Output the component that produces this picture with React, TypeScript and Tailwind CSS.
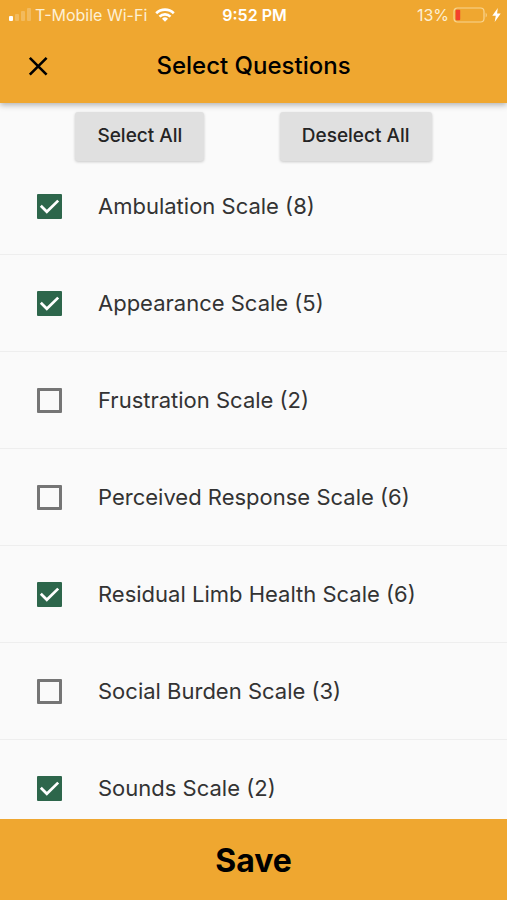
import { useState } from "react";

const SCALES = [
  { name: "Ambulation Scale", count: 8, checked: true },
  { name: "Appearance Scale", count: 5, checked: true },
  { name: "Frustration Scale", count: 2, checked: false },
  { name: "Perceived Response Scale", count: 6, checked: false },
  { name: "Residual Limb Health Scale", count: 6, checked: true },
  { name: "Social Burden Scale", count: 3, checked: false },
  { name: "Sounds Scale", count: 2, checked: true },
];

function StatusBar() {
  return (
    <div className="grid h-[30px] grid-cols-[1fr_auto_1fr] items-center pr-1.5 pl-2 text-base leading-5 text-[#fdf0d4]">
      <div className="flex items-center gap-1">
        <svg width="23" height="14" viewBox="0 0 23 14" fill="#fff" aria-hidden="true">
          <rect x="1" y="8" width="4" height="5" rx="1" />
          <rect x="7" y="6" width="4" height="7" rx="1" opacity=".22" />
          <rect x="13" y="3" width="4" height="10" rx="1" opacity=".22" />
          <rect x="19" y="0" width="4" height="13" rx="1" opacity=".22" />
        </svg>
        <span className="whitespace-nowrap">T-Mobile Wi-Fi</span>
        <svg className="ml-1" width="20" height="14" viewBox="0 0 20 14" aria-hidden="true">
          <g fill="none" stroke="#fff" strokeWidth="2.6">
            <path d="M1.2 5.2a12.6 12.6 0 0 1 17.6 0" />
            <path d="M4.5 8.6a7.9 7.9 0 0 1 11 0" />
          </g>
          <path d="M10 13.8 7 10.8a4.3 4.3 0 0 1 6 0Z" fill="#fff" />
        </svg>
      </div>
      <span className="font-semibold text-white">9:52 PM</span>
      <div className="flex items-center justify-end gap-1">
        <span>13%</span>
        <svg width="35" height="16" viewBox="0 0 35 16" aria-hidden="true">
          <rect x="1" y="1" width="30" height="14" rx="3.5" fill="none" stroke="#f8d592" strokeWidth="1.2" />
          <path d="M32.7 5.4q2.2 2.6 0 5.2Z" fill="#f8d592" />
          <rect x="2.6" y="2.8" width="4.6" height="10.4" rx="1" fill="#f4402c" />
        </svg>
        <svg width="9" height="14" viewBox="0 0 9 14" fill="#fff" aria-hidden="true">
          <path d="M5.8 0 .3 7.8h3.5L2.7 14 8.7 5.6H5.1Z" />
        </svg>
      </div>
    </div>
  );
}

export default function App() {
  const [scales, setScales] = useState(SCALES);
  const setAll = (checked: boolean) => setScales(scales.map((s) => ({ ...s, checked })));
  const toggle = (name: string) =>
    setScales(scales.map((s) => (s.name === name ? { ...s, checked: !s.checked } : s)));

  return (
    <div className="flex h-screen flex-col bg-[#fafafa] font-['Inter','Liberation_Sans',sans-serif]">
      <header className="relative z-20 bg-[#efa730] shadow-[0_2px_6px_rgba(0,0,0,0.3)]">
        <StatusBar />
        <div className="grid h-[73px] grid-cols-[1fr_auto_1fr] items-center px-6 pb-0.5">
          <button type="button" aria-label="Close" className="flex size-7 items-center justify-center">
            <svg width="20" height="20" viewBox="0 0 20 20" fill="none" stroke="#000" strokeWidth="2.6" aria-hidden="true">
              <path d="m1.8 1.8 16.8 16.8M18.6 1.8 1.8 18.6" />
            </svg>
          </button>
          <h1 className="text-2xl font-medium text-black">Select Questions</h1>
        </div>
      </header>

      <main className="min-h-0 flex-1 overflow-y-auto [scrollbar-width:none]">
        <div className="relative z-10 flex justify-evenly pt-[9px]">
          <button
            type="button"
            onClick={() => setAll(true)}
            className="h-[49px] rounded-[3px] bg-[#e0e0e0] px-[22px] text-[19px] font-medium text-[#242424] shadow-[0_1px_3px_rgba(0,0,0,0.2)]"
          >
            Select All
          </button>
          <button
            type="button"
            onClick={() => setAll(false)}
            className="h-[49px] rounded-[3px] bg-[#e0e0e0] px-[22px] text-[19px] font-medium text-[#242424] shadow-[0_1px_3px_rgba(0,0,0,0.2)]"
          >
            Deselect All
          </button>
        </div>
        <ul className="-mt-[3px]">
          {scales.map((s) => (
            <li key={s.name} className="border-b border-[#eeeeee]">
              <label className="flex h-24 items-center gap-9 px-[37px] text-[22px] text-[#333333]">
                <span className="grid size-[25px] shrink-0">
                  <input
                    type="checkbox"
                    checked={s.checked}
                    onChange={() => toggle(s.name)}
                    className="col-start-1 row-start-1 size-[25px] appearance-none rounded-[1px] border-[3px] border-[#757575] checked:border-[#2d664b] checked:bg-[#2d664b]"
                  />
                  {s.checked && (
                    <svg
                      className="pointer-events-none col-start-1 row-start-1"
                      width="25"
                      height="25"
                      viewBox="0 0 25 25"
                      fill="none"
                      stroke="#fff"
                      strokeWidth="2.7"
                      aria-hidden="true"
                    >
                      <path d="m3.8 11.8 6 6L21.2 6.6" />
                    </svg>
                  )}
                </span>
                <span>
                  {s.name} ({s.count})
                </span>
              </label>
            </li>
          ))}
        </ul>
      </main>

      <button type="button" className="h-[81px] shrink-0 bg-[#efa730] pt-0.5 text-[32px] font-bold text-black">
        Save
      </button>
    </div>
  );
}
